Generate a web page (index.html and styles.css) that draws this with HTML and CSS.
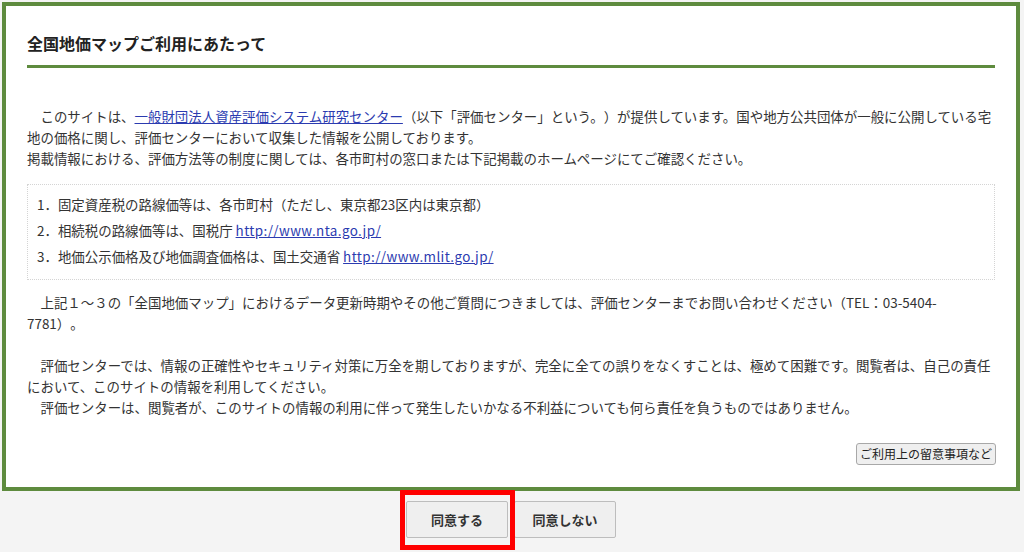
FILE: index.html
```html
<!DOCTYPE html>
<html lang="ja">
<head>
<meta charset="utf-8">
<title>全国地価マップご利用にあたって</title>
<link rel="stylesheet" href="styles.css">
</head>
<body>
<div class="page">
  <section class="frame">
    <h1 class="title">全国地価マップご利用にあたって</h1>
    <p class="para first">　このサイトは、<a href="#" class="link">一般財団法人資産評価システム研究センター</a>（以下「評価センター」という。）が提供しています。国や地方公共団体が一般に公開している宅<br>地の価格に関し、評価センターにおいて収集した情報を公開しております。<br>掲載情報における、評価方法等の制度に関しては、各市町村の窓口または下記掲載のホームページにてご確認ください。</p>
    <ul class="refs">
      <li>1．固定資産税の路線価等は、各市町村（ただし、東京都23区内は東京都）</li>
      <li>2．相続税の路線価等は、国税庁 <a href="#" class="link url">http://www.nta.go.jp/</a></li>
      <li>3．地価公示価格及び地価調査価格は、国土交通省 <a href="#" class="link url">http://www.mlit.go.jp/</a></li>
    </ul>
    <p class="para">　上記１～３の「全国地価マップ」におけるデータ更新時期やその他ご質問につきましては、評価センターまでお問い合わせください（TEL：03-5404-<br>7781）。<br><br>　評価センターでは、情報の正確性やセキュリティ対策に万全を期しておりますが、完全に全ての誤りをなくすことは、極めて困難です。閲覧者は、自己の責任<br>において、このサイトの情報を利用してください。<br>　評価センターは、閲覧者が、このサイトの情報の利用に伴って発生したいかなる不利益についても何ら責任を負うものではありません。</p>
    <div class="notes-row">
      <button class="notes-btn" type="button">ご利用上の留意事項など</button>
    </div>
  </section>
  <div class="actions">
    <button class="act-btn" type="button">同意する</button>
    <button class="act-btn" type="button">同意しない</button>
    <span class="highlight"></span>
  </div>
</div>
</body>
</html>
```
FILE: styles.css
```css
html, body {
  margin: 0;
  padding: 0;
  background: #f4f4f4;
}
body {
  font-family: "Noto Sans CJK JP", "Noto Sans", sans-serif;
  color: #333;
  font-size: 13px;
  text-spacing-trim: space-all;
}
.page {
  width: 1024px;
  height: 552px;
  overflow: hidden;
  padding: 2px 0 0 2px;
  box-sizing: border-box;
}
.frame {
  width: 1018px;
  box-sizing: border-box;
  border: 4px solid #5e8b3e;
  background: #fff;
  padding: 25px 21px 22px 21px;
}
.title {
  margin: 0;
  font-size: 16px;
  line-height: 24px;
  font-weight: bold;
  color: #222;
  padding-bottom: 10px;
  border-bottom: 3px solid #5e8b3e;
}
.para {
  margin: 0;
  font-size: 13.45px;
  line-height: 21px;
  white-space: nowrap;
}
.para.first {
  margin-top: 38px;
}
.link {
  color: #2b3bb0;
  text-decoration: underline;
}
.url {
  letter-spacing: 0.4px;
}
.refs {
  list-style: none;
  margin: 15px 0 12px 0;
  padding: 6px 9px 10px 9px;
  border: 1px dotted #d4d4d4;
  font-size: 13.45px;
}
.refs li {
  line-height: 26px;
  white-space: nowrap;
}
.notes-row {
  display: flex;
  justify-content: flex-end;
  margin-top: 25px;
}
.notes-btn {
  font-family: "Noto Sans CJK JP", "Noto Sans", sans-serif;
  font-size: 12px;
  line-height: 16px;
  color: #222;
  background: #efefef;
  border: 1px solid #a8a8a8;
  border-radius: 3px;
  padding: 2px 3px;
  margin-right: -1px;
  text-spacing-trim: space-all;
}
.actions {
  position: relative;
  display: flex;
  justify-content: center;
  gap: 6px;
  margin-top: 10px;
  width: 1018px;
}
.act-btn {
  font-family: "Noto Sans CJK JP", "Noto Sans", sans-serif;
  font-size: 13px;
  font-weight: bold;
  color: #333;
  width: 102px;
  height: 37px;
  background: #efefef;
  border: 1px solid #bdbdbd;
  border-radius: 2px;
}
.highlight {
  position: absolute;
  left: 398px;
  top: -11px;
  width: 115px;
  height: 60px;
  border: 5px solid #ff0000;
  box-sizing: border-box;
}
```
